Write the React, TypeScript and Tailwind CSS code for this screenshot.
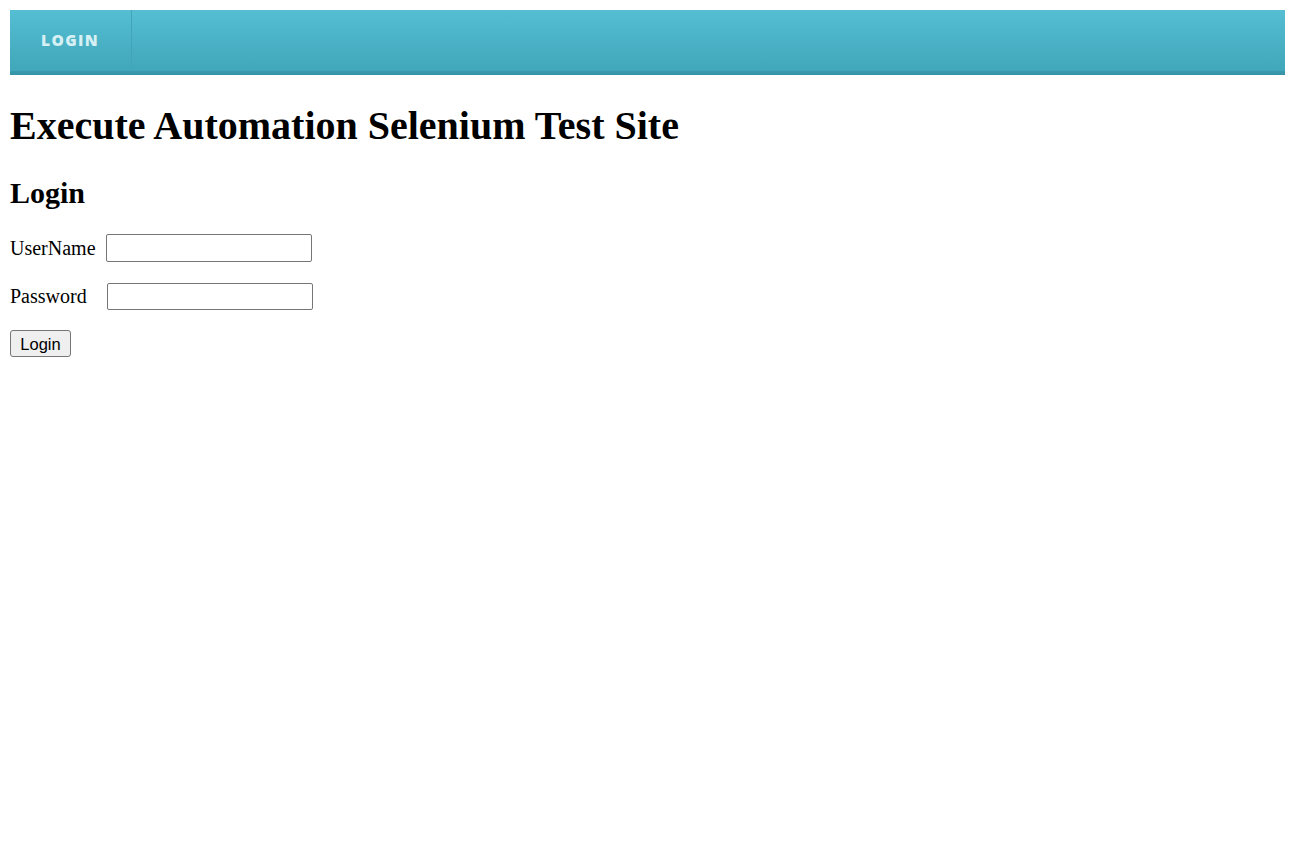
export default function App() {
  return (
    <div className="min-h-screen bg-white p-[10px] text-black" style={{ fontFamily: '"Liberation Serif", "Times New Roman", serif' }}>
      <nav className="flex h-[65px] flex-col bg-gradient-to-b from-[#55bed2] to-[#3fa5b9]">
        <div className="flex flex-1">
          <a
            href="#"
            className="flex w-[122px] items-center border-r border-[#42a4b8] pl-[31px] pt-[1px] text-[15.5px] font-extrabold tracking-[1.4px] text-[#d6f0f4]"
            style={{ fontFamily: '"Open Sans", sans-serif' }}
          >
            LOGIN
          </a>
        </div>
        <div className="h-[4px] bg-gradient-to-b from-[#3a9aad] to-[#3592a5]" />
      </nav>

      <h1 className="mb-[26.8px] mt-[27.8px] text-[40px] font-bold leading-[46px]">Execute Automation Selenium Test Site</h1>
      <h2 className="mb-[24.9px] mt-[22.9px] text-[30px] font-bold leading-[34px]">Login</h2>

      <div className="text-[20px]">
        <p className="my-[20px] flex h-[28px] items-center">
          <span>UserName</span>
          <input type="text" className="ml-[10px] h-[28px] w-[206px] rounded-[2px] border border-[#767676] px-1" />
        </p>
        <p className="my-[20px] flex h-[28px] items-center">
          <span>Password</span>
          <input type="password" className="ml-[20px] h-[27px] w-[206px] rounded-[2px] border border-[#767676] px-1" />
        </p>
        <p className="my-[20px] flex">
          <button
            className="h-[27px] w-[61px] rounded-[3px] border border-[#767676] bg-[#efefef] text-[16.5px] leading-none"
            style={{ fontFamily: '"Liberation Sans", Arial, sans-serif' }}
          >
            Login
          </button>
        </p>
      </div>
    </div>
  );
}
